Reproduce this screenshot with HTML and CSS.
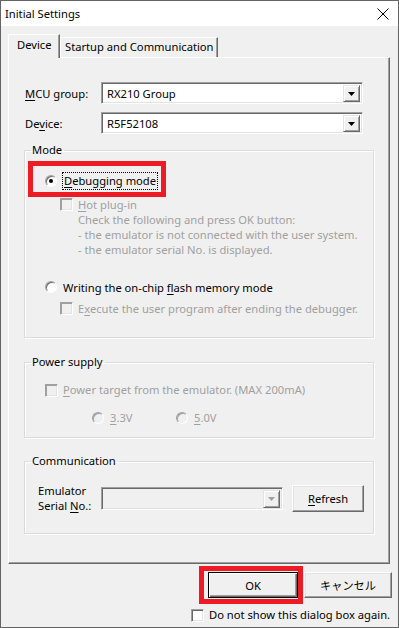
FILE: index.html
```html
<!DOCTYPE html>
<html>
  <head>
    <title>Initial Settings</title>
    <link rel="stylesheet" href="styles.css">
  </head>

  <body>
    <div class="window">
      <!-- Title bar -->
      <div class="titlebar">
        <span class="title">Initial Settings</span>
        <svg class="close" width="12" height="12" viewBox="0 0 12 12">
          <path d="M0.5 0.5L11.5 11.5M11.5 0.5L0.5 11.5" stroke="#000" stroke-width="1" fill="none"/>
        </svg>
      </div>

      <div class="client">
        <!-- Tabs -->
        <div class="tabs">
          <div class="tab active">Device</div>
          <div class="tab">Startup and Communication</div>
        </div>

        <div class="panel">
          <div class="field-row">
            <span class="field-label"><u>M</u>CU group:</span>
            <div class="combo">
              <span class="combo-value">RX210 Group</span>
              <span class="combo-btn"><svg width="7" height="4" viewBox="0 0 7 4"><path d="M0 0H7L3.5 4Z" fill="#000"/></svg></span>
            </div>
          </div>
          <div class="field-row">
            <span class="field-label">De<u>v</u>ice:</span>
            <div class="combo">
              <span class="combo-value">R5F52108</span>
              <span class="combo-btn"><svg width="7" height="4" viewBox="0 0 7 4"><path d="M0 0H7L3.5 4Z" fill="#000"/></svg></span>
            </div>
          </div>

          <!-- Mode -->
          <fieldset class="group group-mode">
            <legend>Mode</legend>
            <div class="group-body">
              <div class="radio-row first">
                <span class="radio checked"></span>
                <span class="focus-label"><u>D</u>ebugging mode</span>
                <span class="annotation"></span>
              </div>
              <div class="check-block disabled">
                <div class="check-row"><span class="checkbox"></span><span><u>H</u>ot plug-in</span></div>
                <div class="note">
                  Check the following and press OK button:<br>
                  - the emulator is not connected with the user system.<br>
                  - the emulator serial No. is displayed.
                </div>
              </div>
              <div class="radio-row second">
                <span class="radio"></span>
                <span class="radio-label">Writing the on-chip <u>f</u>lash memory mode</span>
              </div>
              <div class="check-block disabled tight">
                <div class="check-row"><span class="checkbox"></span><span>E<u>x</u>ecute the user program after ending the debugger.</span></div>
              </div>
            </div>
          </fieldset>

          <!-- Power supply -->
          <fieldset class="group group-power">
            <legend>Power supply</legend>
            <div class="group-body">
              <div class="check-row power-check disabled"><span class="checkbox"></span><span><u>P</u>ower target from the emulator. (MAX 200mA)</span></div>
              <div class="volt-row disabled">
                <div class="volt"><span class="radio"></span><span><u>3</u>.3V</span></div>
                <div class="volt"><span class="radio"></span><span><u>5</u>.0V</span></div>
              </div>
            </div>
          </fieldset>

          <!-- Communication -->
          <fieldset class="group group-comm">
            <legend>Communication</legend>
            <div class="group-body comm-row">
              <span class="comm-label">Emulator<br>Serial <u>N</u>o.:</span>
              <div class="combo combo-disabled">
                <span class="combo-value"></span>
                <span class="combo-btn"><svg width="7" height="4" viewBox="0 0 7 4"><path d="M0 0H7L3.5 4Z" fill="#a0a0a0"/></svg></span>
              </div>
              <button class="btn refresh"><u>R</u>efresh</button>
            </div>
          </fieldset>
        </div>

        <!-- Dialog buttons -->
        <div class="dialog-buttons">
          <div class="ok-wrap">
            <button class="btn default">OK</button>
            <span class="annotation"></span>
          </div>
          <button class="btn cancel">キャンセル</button>
        </div>
        <div class="dont-show">
          <span class="checkbox enabled"></span>
          <span>Do not show this dialog box again.</span>
        </div>
      </div>
    </div>
  </body>
</html>
```

FILE: styles.css
```css
* {
  margin: 0;
  padding: 0;
  box-sizing: border-box;
}

body {
  background: #f0f0f0;
  font-family: 'Noto Sans', 'Noto Sans CJK JP', sans-serif;
  font-size: 11.2px;
  color: #000;
}

u {
  text-decoration: underline;
  text-underline-offset: 2px;
}

.window {
  width: 399px;
  height: 628px;
  border: 1px solid #646464;
  background: #f0f0f0;
  display: flex;
  flex-direction: column;
  overflow: hidden;
}

/* title bar */
.titlebar {
  flex: none;
  height: 25px;
  background: #fff;
  display: flex;
  align-items: center;
  justify-content: space-between;
  padding: 0 9px 0 4px;
}

.title {
  font-size: 11.2px;
}

.close {
  margin-top: 1px;
}

.client {
  padding: 8px 8px 0 7px;
  flex: 1;
  display: flex;
  flex-direction: column;
}

/* tabs */
.tabs {
  display: flex;
  align-items: flex-end;
  height: 23px;
}

.tab {
  height: 20px;
  width: 158px;
  padding-left: 4px;
  line-height: 18px;
  border: 1px solid #fff;
  border-right-color: #696969;
  border-bottom: none;
  box-shadow: inset -1px 0 0 #a0a0a0;
  background: #f0f0f0;
}

.tab.active {
  position: relative;
  z-index: 1;
  height: 24px;
  margin-bottom: -1px;
  width: 52px;
  padding-left: 8px;
  line-height: 19px;
}

.panel {
  flex: none;
  height: 507px;
  border: 1px solid #fff;
  border-right-color: #696969;
  border-bottom-color: #696969;
  box-shadow: inset -1px -1px 0 #a0a0a0;
  padding-top: 24px;
}

/* combos */
.field-row {
  display: flex;
  align-items: center;
  height: 22px;
  margin-bottom: 8px;
  padding-left: 16px;
}

.field-label {
  width: 76px;
}

.combo {
  width: 262px;
  height: 22px;
  display: flex;
  border: 1px solid;
  border-color: #a0a0a0 #fff #fff #a0a0a0;
  box-shadow: inset 1px 1px 0 #696969, inset -1px -1px 0 #e3e3e3;
  background: #fff;
  padding: 2px;
}

.combo-value {
  flex: 1;
  padding-left: 3px;
  line-height: 17px;
}

.combo-btn {
  width: 17px;
  height: 17px;
  display: flex;
  align-items: center;
  justify-content: center;
  background: #f0f0f0;
  border: 1px solid;
  border-color: #e3e3e3 #696969 #696969 #e3e3e3;
  box-shadow: inset 1px 1px 0 #fff, inset -1px -1px 0 #a0a0a0;
}

.combo-disabled {
  width: 182px;
  height: 23px;
  background: #f0f0f0;
}

.combo-disabled .combo-btn {
  height: 18px;
}

/* group boxes */
.group {
  width: 350px;
  min-width: 0;
  margin-left: 15px;
  border: 1px solid #dcdcdc;
  box-shadow: inset 1px 1px 0 #fff, 1px 1px 0 #fff;
  padding: 0;
}

.group legend {
  margin-left: 6px;
  padding: 0 2px 0 1px;
  line-height: 16px;
}

.group-body {
  padding-left: 20px;
}

.group-mode {
  margin-top: 8px;
  padding-bottom: 21px;
}

.group-power {
  margin-top: 16px;
  padding-bottom: 12px;
}

.group-comm {
  margin-top: 15px;
  padding-bottom: 20px;
}

.disabled {
  color: #a0a0a0;
}

.radio-row {
  position: relative;
  display: flex;
  align-items: center;
  height: 18px;
}

.radio-row.first {
  margin-top: 14px;
}

.radio-row.second {
  margin-top: 21px;
}

.radio {
  width: 12px;
  height: 12px;
  border-radius: 50%;
  border: 1px solid;
  border-color: #a0a0a0 #fff #fff #a0a0a0;
  box-shadow: inset 1px 1px 0 #696969;
  background: #fff;
  display: flex;
  align-items: center;
  justify-content: center;
  flex: none;
}

.radio.checked::after {
  content: '';
  width: 4px;
  height: 4px;
  border-radius: 50%;
  background: #000;
}

.disabled .radio {
  background: #f0f0f0;
  box-shadow: inset 1px 1px 0 #a0a0a0;
}

.focus-label {
  margin-left: 5px;
  padding: 0 1px;
  border: 1px dotted #000;
  line-height: 16px;
}

.radio-label {
  margin-left: 6px;
}

.annotation {
  position: absolute;
  border: 5px solid #ed1c24;
}

.radio-row .annotation {
  left: -17px;
  top: -11px;
  width: 138px;
  height: 36px;
}

.check-block {
  margin-left: 15px;
  margin-top: 7px;
  line-height: 15px;
}

.check-block.tight {
  margin-top: 5px;
}

.check-row {
  display: flex;
  align-items: center;
  gap: 5px;
}

.checkbox {
  width: 13px;
  height: 13px;
  flex: none;
  border: 1px solid;
  border-color: #a0a0a0 #fff #fff #a0a0a0;
  box-shadow: inset 1px 1px 0 #696969, inset -1px -1px 0 #e3e3e3;
  background: #f0f0f0;
}

.disabled .checkbox {
  box-shadow: inset 1px 1px 0 #a0a0a0, inset -1px -1px 0 #e3e3e3;
}

.checkbox.enabled {
  background: #fff;
}

.note {
  padding-left: 18px;
}

.power-check {
  margin-top: 13px;
  line-height: 14px;
}

.volt-row {
  display: flex;
  margin-top: 14px;
  padding-left: 47px;
  line-height: 14px;
}

.volt {
  display: flex;
  align-items: center;
  gap: 6px;
  width: 84px;
}

.comm-row {
  display: flex;
  align-items: center;
  margin-top: 14px;
  padding-left: 13px;
}

.comm-label {
  width: 63px;
  line-height: 15px;
}

/* buttons */
.btn {
  font-family: inherit;
  font-size: 11.2px;
  color: #000;
  background: #f0f0f0;
  border: 1px solid;
  border-color: #fff #696969 #696969 #fff;
  box-shadow: inset -1px -1px 0 #a0a0a0, inset 1px 1px 0 #e3e3e3;
}

.refresh {
  width: 72px;
  height: 27px;
  margin-left: 9px;
}

.dialog-buttons {
  display: flex;
  justify-content: flex-end;
  gap: 6px;
  margin-top: 8px;
  margin-right: -2px;
}

.ok-wrap {
  position: relative;
}

.btn.default {
  width: 90px;
  height: 26px;
  border: 1px solid #000;
  box-shadow: inset 1px 1px 0 #fff, inset -1px -1px 0 #696969, inset -2px -2px 0 #a0a0a0;
}

.ok-wrap .annotation {
  left: -9px;
  top: -6px;
  width: 104px;
  height: 38px;
}

.btn.cancel {
  width: 88px;
  height: 26px;
}

.dont-show {
  display: flex;
  align-items: center;
  gap: 5px;
  margin-top: 10px;
  margin-left: 183px;
  line-height: 14px;
  white-space: nowrap;
}
```
